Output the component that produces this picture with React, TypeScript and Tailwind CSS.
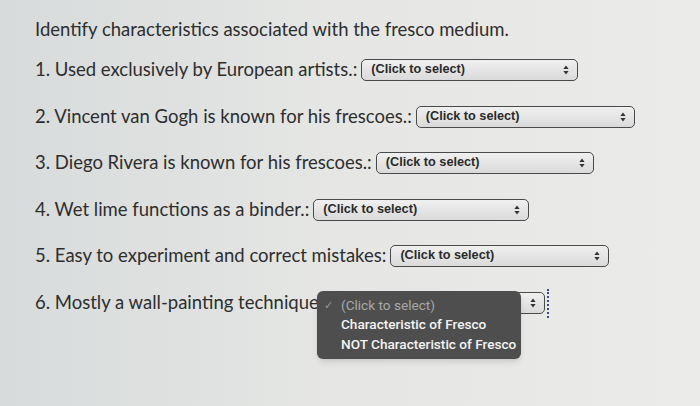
import React from "react";

const rows = [
  { label: "1. Used exclusively by European artists.:", w: 217 },
  { label: "2. Vincent van Gogh is known for his frescoes.:", w: 219 },
  { label: "3. Diego Rivera is known for his frescoes.:", w: 218 },
  { label: "4. Wet lime functions as a binder.:", w: 216 },
  { label: "5. Easy to experiment and correct mistakes:", w: 219 },
];

function Arrows() {
  return (
    <svg width="6" height="10" viewBox="0 0 6 10" className="shrink-0">
      <path d="M3 0.5 L5.6 4 H0.4 Z" fill="#333" />
      <path d="M3 9.5 L5.6 6 H0.4 Z" fill="#333" />
    </svg>
  );
}

function FakeSelect({ width, focused }: { width: number; focused?: boolean }) {
  return (
    <div
      className="relative flex h-[22px] shrink-0 items-center justify-between rounded-[5px] border-[1.5px] border-[#4a4a4a] bg-gradient-to-b from-[#f0f0f0] to-[#dadada] pl-[9px] pr-[8px]"
      style={{ width }}
    >
      <span className="font-['Liberation_Sans',Arial,sans-serif] text-[12.7px] font-bold text-[#2a2a2a]">
        (Click to select)
      </span>
      <Arrows />
      {focused && (
        <span className="absolute -right-[5px] -top-[4px] h-[29px] border-r-2 border-dotted border-[#3a4a8a]" />
      )}
    </div>
  );
}

export default function App() {
  return (
    <div className="h-[406px] w-[700px] overflow-hidden bg-gradient-to-r from-[#d7dbdb] via-[#e6e7e5] to-[#ebebea] pl-[35px] pt-[17px] font-['Lato',sans-serif] text-[#2e2e2e]">
      <h1 className="h-[24px] whitespace-nowrap text-[18.5px] leading-[24px]">
        Identify characteristics associated with the fresco medium.
      </h1>
      <div className="mt-[17px] flex flex-col gap-[22.5px]">
        {rows.map((r) => (
          <div key={r.label} className="flex h-[24px] items-center gap-[4px] whitespace-nowrap text-[18.5px]">
            <span>{r.label}</span>
            <FakeSelect width={r.w} />
          </div>
        ))}
        <div className="relative flex h-[24px] items-center gap-[4px] whitespace-nowrap text-[18.5px]">
          <span>6. Mostly a wall-painting technique</span>
          <FakeSelect width={222} focused />
          <div className="absolute left-[282px] top-0 w-[204px] rounded-[6px] bg-[#4e4e4e] py-[5px] font-['Roboto',sans-serif] text-[13.6px] font-medium leading-[19.5px] shadow-md">
            <div className="flex items-center">
              <span className="w-[24px] pl-[7px] text-[11px] text-[#9a9a9a]">✓</span>
              <span className="font-normal text-[#a8a8a8]">(Click to select)</span>
            </div>
            <div className="pl-[24px] text-[#f4f4f4]">Characteristic of Fresco</div>
            <div className="pl-[24px] text-[#f4f4f4]">NOT Characteristic of Fresco</div>
          </div>
        </div>
      </div>
    </div>
  );
}
